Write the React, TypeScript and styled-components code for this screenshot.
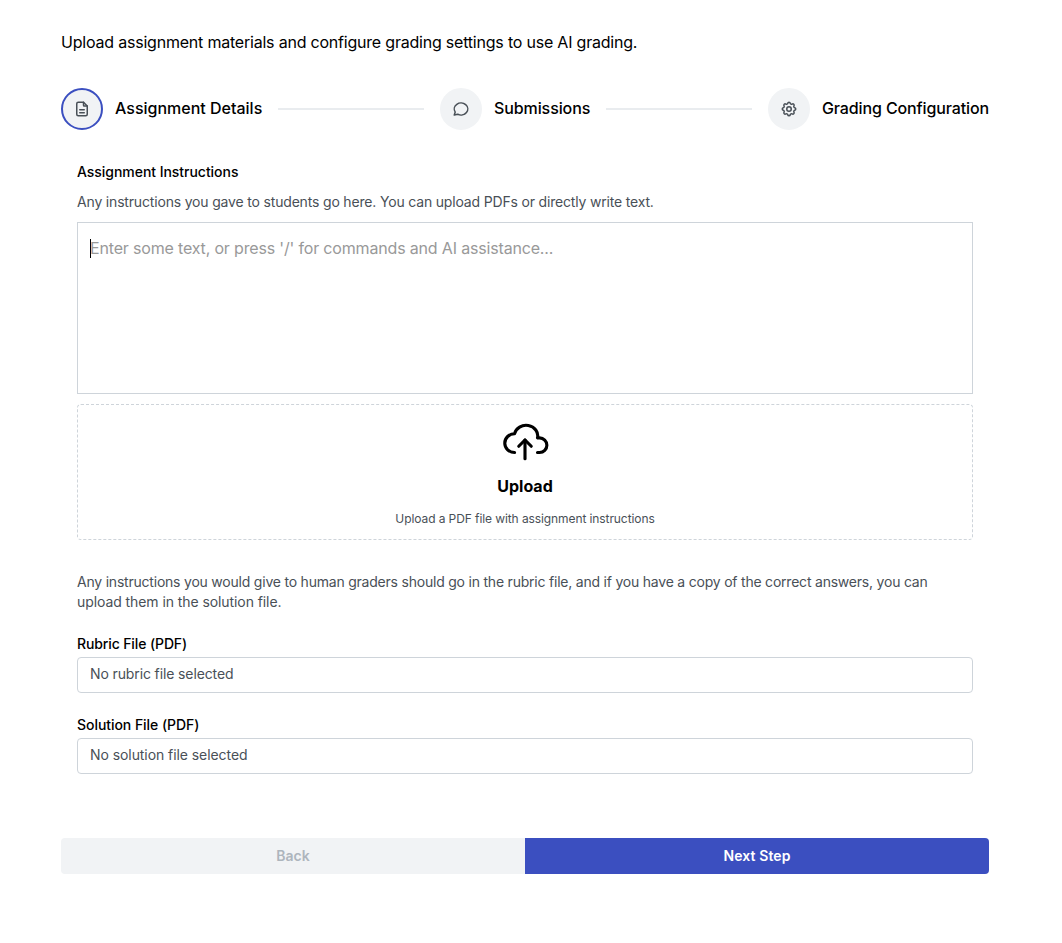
import React from 'react'
import styled, { createGlobalStyle } from 'styled-components'
import { TbCloudUpload, TbFileDescription, TbMessageCircle, TbSettings } from 'react-icons/tb'

interface TextProps {
  $spacing?: number
}

interface StepProps {
  icon: React.ReactNode
  label: string
  spacing?: number
  active?: boolean
}

interface FileFieldProps {
  id: string
  label: string
  value: string
  labelSpacing?: number
  spacing?: number
}

const GlobalStyle = createGlobalStyle`
  *, *::before, *::after {
    box-sizing: border-box;
  }
  body {
    margin: 0;
    background: #fff;
    color: #000;
    font-family: Inter, 'Liberation Sans', sans-serif;
    font-size: 16px;
    line-height: 1.55;
  }
  h1, p {
    margin: 0;
  }
`
const Page = styled.main`
  width: 928px;
  margin-left: 61px;
  padding-top: 30px;
`
const Intro = styled.p<TextProps>`
  height: 25px;
  line-height: 25px;
  white-space: nowrap;
  letter-spacing: ${({ $spacing = 0 }) => $spacing}px;
`
const Stepper = styled.div`
  display: flex;
  align-items: center;
  margin-top: 33px;
`
const StepBox = styled.div`
  display: flex;
  align-items: center;
  gap: 12px;
`
const StepIcon = styled.div<{ $active?: boolean }>`
  width: 42px;
  height: 42px;
  display: flex;
  align-items: center;
  justify-content: center;
  border: 2px solid ${({ $active }) => ($active ? '#3b4fc0' : '#f1f3f5')};
  border-radius: 50%;
  background: #f1f3f5;
  color: #495057;
`
const StepLabel = styled.span<TextProps>`
  padding-bottom: 2px;
  font-weight: 500;
  line-height: 16px;
  white-space: nowrap;
  letter-spacing: ${({ $spacing = 0 }) => $spacing}px;
`
const Separator = styled.div`
  flex: 1;
  height: 2px;
  margin: 0 16px;
  background: #e9ecef;
`
const Content = styled.section`
  padding: 31px 16px 0;
`
const Label = styled.label<TextProps>`
  display: block;
  font-size: 14px;
  font-weight: 500;
  line-height: 22px;
  letter-spacing: ${({ $spacing = 0 }) => $spacing}px;
`
const Hint = styled.p<TextProps>`
  color: #495057;
  font-size: 14px;
  line-height: 20px;
  white-space: nowrap;
  letter-spacing: ${({ $spacing = 0 }) => $spacing}px;
`
const Instructions = styled(Hint)`
  margin-top: 9px;
`
const Editor = styled.div`
  height: 172px;
  margin-top: 10px;
  padding: 13px 12px;
  border: 1px solid #ced4da;
`
const Placeholder = styled.p<TextProps>`
  display: flex;
  align-items: center;
  height: 25px;
  color: #999;
  letter-spacing: ${({ $spacing = 0 }) => $spacing}px;
`
const Caret = styled.span`
  width: 1px;
  height: 19px;
  margin-right: -1px;
  background: #000;
`
const Dropzone = styled.div`
  display: flex;
  flex-direction: column;
  align-items: center;
  height: 136px;
  margin-top: 10px;
  padding-top: 10px;
  border: 1px dashed #ced4da;
  border-radius: 4px;
`
const UploadIcon = styled(TbCloudUpload)`
  width: 50px;
  height: 50px;
  stroke-width: 1.5;
`
const DropTitle = styled.span<TextProps>`
  margin-top: 9px;
  font-weight: 700;
  line-height: 25px;
  letter-spacing: ${({ $spacing = 0 }) => $spacing}px;
`
const DropText = styled.span<TextProps>`
  margin-top: 10px;
  color: #495057;
  font-size: 12px;
  line-height: 19px;
  letter-spacing: ${({ $spacing = 0 }) => $spacing}px;
`
const GraderNotes = styled.div`
  margin: 32px 0 21px;
`
const Field = styled.div`
  margin-bottom: 21px;
`
const FileInput = styled.button<TextProps>`
  display: block;
  width: 100%;
  height: 36px;
  margin: 2px 0 0;
  padding: 0 12px 3px;
  border: 1px solid #ced4da;
  border-radius: 4px;
  background: #fff;
  color: #495057;
  font-family: inherit;
  font-size: 14px;
  text-align: left;
  letter-spacing: ${({ $spacing = 0 }) => $spacing}px;
`
const Actions = styled.div`
  display: flex;
  margin-top: 64px;
  border-radius: 4px;
  overflow: hidden;
`
const Button = styled.button<TextProps & { $primary?: boolean }>`
  flex: 1;
  height: 36px;
  padding: 0 0 1px;
  border: 0;
  background: ${({ $primary }) => ($primary ? '#3b4fc0' : '#f1f3f5')};
  color: ${({ $primary }) => ($primary ? '#fff' : '#adb5bd')};
  font-family: inherit;
  font-size: 14px;
  font-weight: 600;
  letter-spacing: ${({ $spacing = 0 }) => $spacing}px;
`

function Step({ icon, label, spacing, active }: StepProps): JSX.Element {
  return (
    <StepBox>
      <StepIcon $active={active}>{icon}</StepIcon>
      <StepLabel $spacing={spacing}>{label}</StepLabel>
    </StepBox>
  )
}

function FileField({ id, label, value, labelSpacing, spacing }: FileFieldProps): JSX.Element {
  return (
    <Field>
      <Label htmlFor={id} $spacing={labelSpacing}>{label}</Label>
      <FileInput id={id} type="button" $spacing={spacing}>{value}</FileInput>
    </Field>
  )
}

export default function App(): JSX.Element {
  return (
    <>
      <GlobalStyle />
      <Page>
        <Intro $spacing={-0.21}>
          Upload assignment materials and configure grading settings to use AI grading.
        </Intro>
        <Stepper>
          <Step active icon={<TbFileDescription size={18} />} label="Assignment Details" />
          <Separator />
          <Step icon={<TbMessageCircle size={18} />} label="Submissions" spacing={-0.09} />
          <Separator />
          <Step icon={<TbSettings size={18} />} label="Grading Configuration" spacing={-0.12} />
        </Stepper>
        <Content>
          <Label as="h1" $spacing={-0.04}>Assignment Instructions</Label>
          <Instructions $spacing={-0.175}>
            Any instructions you gave to students go here. You can upload PDFs or directly write text.
          </Instructions>
          <Editor>
            <Placeholder $spacing={-0.17}>
              <Caret />
              Enter some text, or press '/' for commands and AI assistance...
            </Placeholder>
          </Editor>
          <Dropzone>
            <UploadIcon />
            <DropTitle>Upload</DropTitle>
            <DropText $spacing={-0.09}>Upload a PDF file with assignment instructions</DropText>
          </Dropzone>
          <GraderNotes>
            <Hint $spacing={-0.215}>
              Any instructions you would give to human graders should go in the rubric file, and if you have a copy of the correct answers, you can
            </Hint>
            <Hint $spacing={-0.08}>upload them in the solution file.</Hint>
          </GraderNotes>
          <FileField
            id="rubric"
            label="Rubric File (PDF)"
            value="No rubric file selected"
            labelSpacing={-0.12}
            spacing={-0.12}
          />
          <FileField
            id="solution"
            label="Solution File (PDF)"
            value="No solution file selected"
            labelSpacing={-0.05}
            spacing={-0.07}
          />
        </Content>
        <Actions>
          <Button type="button" disabled>Back</Button>
          <Button type="button" $primary $spacing={0.1}>Next Step</Button>
        </Actions>
      </Page>
    </>
  )
}
